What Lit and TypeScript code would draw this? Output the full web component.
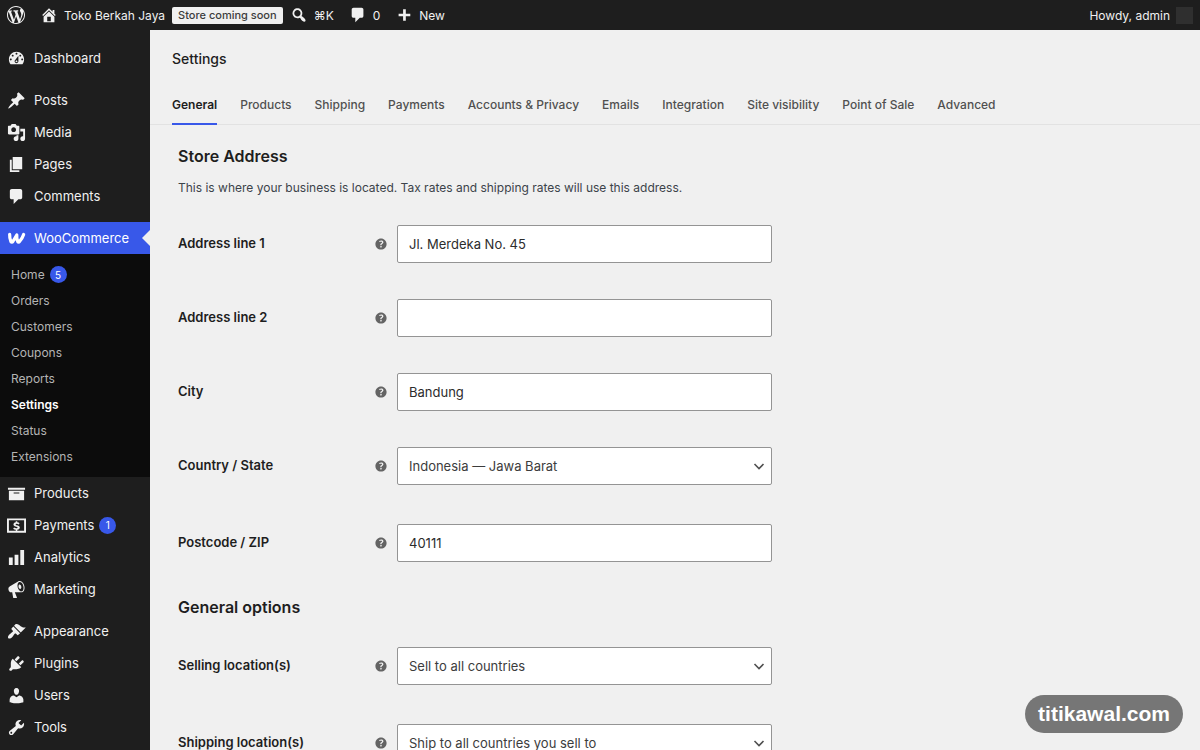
import { LitElement, html, css, svg, nothing } from "lit";
import { customElement, property, state } from "lit/decorators.js";
import { classMap } from "lit/directives/class-map.js";

const ICONS: Record<string, string> = {
  wordpress:
    "M20 10c0-5.51-4.49-10-10-10C4.48 0 0 4.49 0 10c0 5.52 4.48 10 10 10 5.51 0 10-4.48 10-10zM7.78 15.37L4.37 6.22c.55-.02 1.17-.08 1.17-.08.5-.06.44-1.13-.06-1.11 0 0-1.45.11-2.37.11-.18 0-.37 0-.58-.01C4.12 2.69 6.87 1.11 10 1.11c2.33 0 4.45.87 6.05 2.34-.68-.11-1.65.39-1.65 1.58 0 .74.45 1.36.9 2.1.35.61.55 1.36.55 2.46 0 1.49-1.4 5-1.4 5l-3.03-8.37c.54-.02.82-.17.82-.17.5-.05.44-1.25-.06-1.22 0 0-1.44.12-2.38.12-.87 0-2.33-.12-2.33-.12-.5-.03-.56 1.2-.06 1.22l.92.08 1.26 3.41zM17.41 10c.24-.64.74-1.87.43-4.25.7 1.29 1.05 2.71 1.05 4.25 0 3.29-1.73 6.24-4.4 7.78.97-2.59 1.94-5.2 2.92-7.78zM6.1 18.09C3.12 16.65 1.11 13.53 1.11 10c0-1.3.23-2.48.72-3.59C3.25 10.3 4.67 14.2 6.1 18.09zm4.03-6.63l2.58 6.98c-.86.29-1.76.45-2.71.45-.79 0-1.57-.11-2.29-.33.81-2.38 1.62-4.74 2.42-7.1z",
  home:
    "M16 8.5l1.53 1.53-1.06 1.06L10 4.6l-6.47 6.49-1.06-1.06L10 2.5l4 4v-2h2v4zm-6-2.46l6 5.99V18H4v-5.97zM12 17v-5H8v5h4z",
  search:
    "M12.14 4.18c1.87 1.87 2.11 4.75.72 6.89.12.1.22.21.36.31.2.16.47.36.81.59.34.24.56.39.66.47.42.31.73.57.94.78.32.32.6.65.84 1 .25.35.44.69.59 1.04.14.35.21.68.18 1-.02.32-.14.59-.36.81s-.49.34-.81.36c-.31.02-.65-.04-.99-.19-.35-.14-.7-.34-1.04-.59-.35-.24-.68-.52-1-.84-.21-.21-.47-.52-.77-.93-.1-.13-.25-.35-.47-.66-.22-.32-.4-.57-.56-.78-.16-.2-.29-.35-.44-.5-2.07 1.09-4.69.76-6.44-.98-2.14-2.15-2.14-5.64 0-7.78 2.15-2.15 5.63-2.15 7.78 0zm-1.41 6.36c1.36-1.37 1.36-3.58 0-4.95-1.37-1.37-3.59-1.37-4.95 0-1.37 1.37-1.37 3.58 0 4.95 1.36 1.37 3.58 1.37 4.95 0z",
  plus: "M17 8.5v3h-5v5H9v-5H4v-3h5v-5h3v5h5z",
  dashboard:
    "M3.76 16h12.48c1.1-1.37 1.76-3.11 1.76-5 0-4.42-3.58-8-8-8s-8 3.58-8 8c0 1.89.66 3.63 1.76 5zM10 4c.55 0 1 .45 1 1s-.45 1-1 1-1-.45-1-1 .45-1 1-1zM6 6c.55 0 1 .45 1 1s-.45 1-1 1-1-.45-1-1 .45-1 1-1zm8 0c.55 0 1 .45 1 1s-.45 1-1 1-1-.45-1-1 .45-1 1-1zm-5.37 5.55L12 7v6c0 1.1-.9 2-2 2s-2-.9-2-2c0-.57.24-1.08.63-1.45zM4 10c.55 0 1 .45 1 1s-.45 1-1 1-1-.45-1-1 .45-1 1-1zm12 0c.55 0 1 .45 1 1s-.45 1-1 1-1-.45-1-1 .45-1 1-1zm-5 3c0-.55-.45-1-1-1s-1 .45-1 1 .45 1 1 1 1-.45 1-1z",
  post:
    "M10.44 3.02l1.82-1.82 6.36 6.35-1.83 1.82c-1.05-.68-2.48-.57-3.41.36l-.75.75c-.92.93-1.04 2.35-.35 3.41l-1.83 1.82-2.41-2.41-2.8 2.79c-.42.42-3.38 2.71-3.8 2.29s1.86-3.39 2.28-3.81l2.79-2.79L4.1 9.36l1.83-1.82c1.05.69 2.48.57 3.4-.36l.75-.75c.93-.92 1.05-2.35.36-3.41z",
  media:
    "M13 11V4c0-.55-.45-1-1-1h-1.67L9 1H5L3.67 3H2c-.55 0-1 .45-1 1v7c0 .55.45 1 1 1h10c.55 0 1-.45 1-1zM7 4.5c1.38 0 2.5 1.12 2.5 2.5S8.38 9.5 7 9.5 4.5 8.38 4.5 7 5.62 4.5 7 4.5zM14 6h5v10.5c0 1.38-1.12 2.5-2.5 2.5S14 17.88 14 16.5s1.12-2.5 2.5-2.5c.17 0 .34.02.5.05V9h-3V6zm-4 8.05V13h2v3.5c0 1.38-1.12 2.5-2.5 2.5S7 17.88 7 16.5 8.12 14 9.5 14c.17 0 .34.02.5.05z",
  page: "M6 15V2h10v13H6zm-1 1h8v2H3V5h2v11z",
  comment:
    "M5 2h9c1.1 0 2 .9 2 2v7c0 1.1-.9 2-2 2h-2l-5 5v-5H5c-1.1 0-2-.9-2-2V4c0-1.1.9-2 2-2z",
  archive: "M19 4v2H1V4h18zM2 7h16v10H2V7zm11 3V9H7v1h6z",
  payments:
    "M0 2.5h20v15H0zM2 4.5v11h16v-11zM9.2 5.5h1.6v1.1c1 .1 1.8.5 2.4 1l-.9 1.3c-.6-.4-1.3-.7-2-.7-.8 0-1.2.3-1.2.7 0 1.3 4.4.6 4.4 3.2 0 1.3-1 2.1-2.7 2.3v1.1H9.2v-1.1c-1.1-.1-2-.5-2.7-1.1l.9-1.3c.7.5 1.5.8 2.3.8.9 0 1.5-.2 1.5-.7 0-1.3-4.4-.7-4.4-3.2 0-1.2.9-2.1 2.4-2.3z",
  chart: "M18 18V2h-4v16h4zm-6 0V7H8v11h4zm-6 0v-8H2v8h4z",
  megaphone:
    "M18.15 5.94c.46 1.62.38 3.22-.02 4.48-.42 1.28-1.26 2.18-2.3 2.48-.16.06-.26.06-.4.06-.06.02-.12.02-.18.02-.06.02-.14.02-.22.02h-6.8l2.22 5.5c.02.14-.06.26-.14.34-.08.1-.24.16-.34.16H6.95c-.1 0-.26-.06-.34-.16-.08-.08-.16-.2-.14-.34l-1-5.5H4.25l-.02-.02c-.5.06-1.08-.18-1.54-.62s-.88-1.08-1.06-1.88c-.24-.8-.2-1.56-.02-2.2.18-.62.58-1.08 1.06-1.3l.02-.02 9-5.4c.1-.06.18-.1.24-.16.06-.04.14-.08.24-.12.16-.08.28-.12.5-.18 1.04-.3 2.24.1 3.22.98s1.84 2.24 2.26 3.86zm-2.58 5.98h-.02c.4-.1.74-.34 1.04-.7.58-.7.86-1.76.86-3.04 0-.64-.1-1.3-.28-1.98-.34-1.36-1.02-2.5-1.78-3.24s-1.68-1.1-2.46-.88c-.82.22-1.4.96-1.7 2-.32 1.04-.28 2.36.06 3.72.38 1.36 1 2.5 1.8 3.24.78.74 1.62 1.1 2.48.88zm-2.54-7.08c.22-.04.42-.02.62.04.38.16.76.48 1.02 1s.42 1.2.42 1.78c0 .3-.04.56-.12.8-.18.48-.44.84-.86.94-.34.1-.8-.06-1.14-.4s-.64-.86-.78-1.5c-.18-.62-.12-1.24.02-1.72s.48-.84.82-.94z",
  appearance:
    "M14.48 11.06L7.41 3.99l1.5-1.5c.5-.56 2.3-.47 3.51.32 1.21.8 1.43 1.28 2.91 2.1 1.18.64 2.45 1.26 4.45.85zm-.71.71L6.7 4.7 4.93 6.47c-.39.39-.39 1.02 0 1.41l1.06 1.06c.39.39.39 1.03 0 1.42-.6.6-1.43 1.11-2.21 1.69-.35.26-.7.53-1.01.84C1.43 14.23.4 16.08 1.4 17.07c.99 1 2.84-.03 4.18-1.36.31-.31.58-.66.85-1.02.57-.78 1.08-1.61 1.69-2.21.39-.39 1.02-.39 1.41 0l1.06 1.06c.39.39 1.02.39 1.41 0z",
  plugins:
    "M13.11 4.36L9.87 7.6 8 5.73l3.24-3.24c.35-.34 1.05-.2 1.56.32.52.51.66 1.21.31 1.55zm-8 1.77l.91-1.12 9.01 9.01-1.19.84c-.71.71-2.63 1.16-3.82 1.16H6.14L4.9 17.26c-.59.59-1.54.59-2.12 0-.59-.58-.59-1.53 0-2.12l1.24-1.24v-3.88c0-1.13.4-3.19 1.09-3.89zm7.26 3.97l3.24-3.24c.34-.35 1.04-.21 1.55.31.52.51.66 1.21.31 1.55l-3.24 3.25z",
  users:
    "M10 9.25c-2.27 0-2.73-3.44-2.73-3.44C7 4.02 7.82 2 9.97 2c2.16 0 2.98 2.02 2.71 3.81 0 0-.41 3.44-2.68 3.44zm0 2.57L12.72 10c2.39 0 4.52 2.33 4.52 4.53v2.49s-3.65 1.13-7.24 1.13c-3.65 0-7.24-1.13-7.24-1.13v-2.49c0-2.25 1.94-4.48 4.47-4.48z",
  tools:
    "M16.68 9.77c-1.34 1.34-3.3 1.67-4.95.99l-5.41 6.52c-.99.99-2.59.99-3.58 0s-.99-2.59 0-3.57l6.52-5.42c-.68-1.65-.35-3.61.99-4.95 1.28-1.28 3.12-1.62 4.72-1.06l-2.89 2.89 2.82 2.82 2.86-2.87c.53 1.58.18 3.39-1.08 4.65zM3.81 16.21c.4.39 1.04.39 1.43 0 .4-.4.4-1.04 0-1.43-.39-.4-1.03-.4-1.43 0-.39.39-.39 1.03 0 1.43z",
  help:
    "M17 10c0-3.87-3.14-7-7-7-3.87 0-7 3.13-7 7s3.13 7 7 7c3.86 0 7-3.13 7-7zm-6.3 1.48H9.14v-.43c0-.38.08-.7.24-.98s.46-.57.88-.89c.41-.29.68-.53.81-.71.14-.18.2-.39.2-.62 0-.25-.09-.44-.28-.58-.19-.13-.45-.19-.79-.19-.58 0-1.25.19-2 .57l-.64-1.28c.87-.49 1.8-.74 2.77-.74.81 0 1.45.2 1.92.58.48.39.71.91.71 1.55 0 .43-.09.8-.29 1.11-.19.32-.57.67-1.11 1.06-.38.28-.61.49-.71.63-.1.15-.15.34-.15.57v.35zm-1.47 2.74c-.18-.17-.27-.42-.27-.73 0-.33.08-.58.26-.75s.43-.25.77-.25c.32 0 .57.09.75.26s.27.42.27.74c0 .3-.09.55-.27.72-.18.18-.43.27-.75.27-.33 0-.58-.09-.76-.26z",
};

// The WooCommerce mark is a single heavy rounded stroke rather than a filled outline.
const STROKED: Record<string, string> = {
  woo: "M2.8 5.7c-.1 2.700.3 5.300 1.300 7.500.6.9 1.500.8 2.100 0L10.300 6.300c-.2 2.500.1 4.900 1 6.900.5.8 1.300.8 1.900 0 2-2.300 3.400-4.800 4.300-7.500",
};

@customElement("wp-icon")
export class WpIcon extends LitElement {
  static styles = css`
    :host {
      display: block;
      flex: none;
      width: 19px;
      height: 19px;
    }
    svg {
      display: block;
      width: 100%;
      height: 100%;
      fill: currentColor;
    }
    .stroked {
      fill: none;
      stroke: currentColor;
      stroke-width: 3.4;
      stroke-linecap: round;
      stroke-linejoin: round;
    }
  `;

  @property() name = "";

  render() {
    const stroked = STROKED[this.name];
    return html`<svg viewBox="0 0 20 20" aria-hidden="true">
      ${stroked
        ? svg`<path class="stroked" d=${stroked}></path>`
        : svg`<path fill-rule="evenodd" d=${ICONS[this.name] ?? ""}></path>`}
    </svg>`;
  }
}

interface MenuItem {
  label: string;
  icon: string;
  count?: number;
  children?: { label: string; count?: number }[];
}

const MENU: MenuItem[][] = [
  [{ label: "Dashboard", icon: "dashboard" }],
  [
    { label: "Posts", icon: "post" },
    { label: "Media", icon: "media" },
    { label: "Pages", icon: "page" },
    { label: "Comments", icon: "comment" },
  ],
  [
    {
      label: "WooCommerce",
      icon: "woo",
      children: [
        { label: "Home", count: 5 },
        { label: "Orders" },
        { label: "Customers" },
        { label: "Coupons" },
        { label: "Reports" },
        { label: "Settings" },
        { label: "Status" },
        { label: "Extensions" },
      ],
    },
    { label: "Products", icon: "archive" },
    { label: "Payments", icon: "payments", count: 1 },
    { label: "Analytics", icon: "chart" },
    { label: "Marketing", icon: "megaphone" },
  ],
  [
    { label: "Appearance", icon: "appearance" },
    { label: "Plugins", icon: "plugins" },
    { label: "Users", icon: "users" },
    { label: "Tools", icon: "tools" },
  ],
];

@customElement("admin-menu")
export class AdminMenu extends LitElement {
  static styles = css`
    :host {
      display: block;
      background: #1e1e1e;
      overflow: hidden;
    }
    .menu {
      display: flex;
      flex-direction: column;
      gap: 10px;
      padding: 12px 0;
    }
    ul {
      list-style: none;
      margin: 0;
      padding: 0;
    }
    a {
      color: #f0f0f0;
      text-decoration: none;
    }
    .item {
      position: relative;
      display: flex;
      align-items: center;
      height: 32px;
      padding-left: 7px;
      gap: 8px;
      font-size: 13px;
    }
    .item.current {
      background: #3858e9;
      color: #fff;
    }
    .item.current::after {
      content: "";
      position: absolute;
      right: 0;
      top: 8px;
      border: 8px solid transparent;
      border-left-width: 0;
      border-right-color: #f0f0f0;
    }
    .badge {
      display: grid;
      place-items: center;
      width: 17px;
      height: 17px;
      border-radius: 50%;
      background: #3858e9;
      color: #fff;
      font-size: 10px;
    }
    .item .badge {
      margin-left: -3px;
    }
    .submenu {
      padding: 7px 0;
      background: #0c0c0c;
    }
    .sub {
      display: flex;
      align-items: center;
      gap: 5px;
      padding: 5px 11px;
      font-size: 12px;
      line-height: 16px;
      color: #b4b4b4;
    }
    .sub.active {
      color: #fff;
      font-weight: 600;
    }
  `;

  render() {
    return html`<nav class="menu" aria-label="Main menu">
      ${MENU.map(
        (group) => html`<ul>
          ${group.map(
            (item) => html`<li>
              <a href="#" class=${classMap({ item: true, current: !!item.children })}>
                <wp-icon name=${item.icon}></wp-icon>
                <span>${item.label}</span>
                ${item.count ? html`<span class="badge">${item.count}</span>` : nothing}
              </a>
              ${item.children
                ? html`<ul class="submenu">
                    ${item.children.map(
                      (c) => html`<li>
                        <a href="#" class=${classMap({ sub: true, active: c.label === "Settings" })}>
                          ${c.label}${c.count ? html`<span class="badge">${c.count}</span>` : nothing}
                        </a>
                      </li>`
                    )}
                  </ul>`
                : nothing}
            </li>`
          )}
        </ul>`
      )}
    </nav>`;
  }
}

@customElement("admin-bar")
export class AdminBar extends LitElement {
  static styles = css`
    :host {
      display: flex;
      align-items: center;
      height: 30px;
      padding: 0 7px;
      background: #1e1e1e;
      color: #f0f0f0;
      font-size: 12px;
    }
    a {
      display: flex;
      align-items: center;
      gap: 6px;
      color: inherit;
      text-decoration: none;
    }
    .links {
      display: flex;
      align-items: center;
      flex: 1;
      gap: 15px;
    }
    .site {
      display: flex;
      align-items: center;
      gap: 7px;
    }
    .status {
      padding: 0 6px;
      border-radius: 2px;
      background: #f0f0f0;
      color: #3c3c3c;
      font-size: 11px;
      font-weight: 500;
      line-height: 17px;
    }
    wp-icon {
      width: 18px;
      height: 18px;
    }
    .avatar {
      width: 17px;
      height: 17px;
      background: #2f2f2f;
    }
  `;

  render() {
    return html`
      <div class="links">
        <a href="#" aria-label="About WordPress"><wp-icon name="wordpress"></wp-icon></a>
        <div class="site">
          <a href="#"><wp-icon name="home"></wp-icon>Toko Berkah Jaya</a>
          <a href="#" class="status">Store coming soon</a>
          <a href="#"><wp-icon name="search"></wp-icon>⌘K</a>
        </div>
        <a href="#"><wp-icon name="comment"></wp-icon>0</a>
        <a href="#"><wp-icon name="plus"></wp-icon>New</a>
      </div>
      <a href="#">Howdy, admin<span class="avatar"></span></a>
    `;
  }
}

interface Field {
  id: string;
  label: string;
  value: string;
  select?: boolean;
}

const SECTIONS: { title: string; note?: string; fields: Field[] }[] = [
  {
    title: "Store Address",
    note: "This is where your business is located. Tax rates and shipping rates will use this address.",
    fields: [
      { id: "address1", label: "Address line 1", value: "Jl. Merdeka No. 45" },
      { id: "address2", label: "Address line 2", value: "" },
      { id: "city", label: "City", value: "Bandung" },
      { id: "country", label: "Country / State", value: "Indonesia — Jawa Barat", select: true },
      { id: "postcode", label: "Postcode / ZIP", value: "40111" },
    ],
  },
  {
    title: "General options",
    fields: [
      { id: "selling", label: "Selling location(s)", value: "Sell to all countries", select: true },
      { id: "shipping", label: "Shipping location(s)", value: "Ship to all countries you sell to", select: true },
    ],
  },
];

@customElement("settings-form")
export class SettingsForm extends LitElement {
  static styles = css`
    :host {
      display: block;
      padding: 0 28px;
    }
    h2 {
      margin: 0;
      font-size: 16px;
      font-weight: 600;
      line-height: 22px;
      color: #1e1e1e;
    }
    .section {
      padding-top: 20px;
    }
    .section + .section {
      padding-top: 16px;
    }
    .note {
      margin: 13px 0 0;
      font-size: 12px;
      line-height: 16px;
      color: #3c434a;
    }
    .fields {
      padding-top: 11px;
    }
    .row {
      display: grid;
      grid-template-columns: 187px 16px minmax(0, 375px);
      column-gap: 8px;
      align-items: center;
      padding: 18px 0;
    }
    .row.choice {
      padding-bottom: 21px;
    }
    label {
      padding-bottom: 2px;
      font-size: 13px;
      font-weight: 600;
      line-height: 18px;
      color: #1e1e1e;
    }
    wp-icon {
      width: 16px;
      height: 16px;
      color: #646464;
    }
    .control {
      display: grid;
      align-items: center;
    }
    input,
    select {
      grid-area: 1 / 1;
      box-sizing: border-box;
      width: 100%;
      height: 38px;
      margin: 0;
      padding: 0 11px;
      border: 1px solid #949494;
      border-radius: 2px;
      background: #fff;
      color: #2c2c2c;
      font: inherit;
      font-size: 13px;
      appearance: none;
    }
    select {
      color: #3c3c3c;
    }
    .chevron {
      grid-area: 1 / 1;
      justify-self: end;
      width: 12px;
      height: 8px;
      margin-right: 7px;
      fill: none;
      stroke: #505050;
      stroke-width: 1.6;
      pointer-events: none;
    }
  `;

  private control(f: Field) {
    return f.select
      ? html`<select id=${f.id}>
            <option>${f.value}</option>
          </select>
          <svg class="chevron" viewBox="0 0 12 8" aria-hidden="true"><path d="M1.5 2 6 6.5 10.5 2"></path></svg>`
      : html`<input id=${f.id} type="text" .value=${f.value} />`;
  }

  render() {
    return SECTIONS.map(
      (s) => html`<section class="section">
        <h2>${s.title}</h2>
        ${s.note ? html`<p class="note">${s.note}</p>` : nothing}
        <div class="fields">
          ${s.fields.map(
            (f) => html`<div class=${classMap({ row: true, choice: !!f.select })}>
              <label for=${f.id}>${f.label}</label>
              <wp-icon name="help"></wp-icon>
              <div class="control">${this.control(f)}</div>
            </div>`
          )}
        </div>
      </section>`
    );
  }
}

const TABS = [
  "General",
  "Products",
  "Shipping",
  "Payments",
  "Accounts & Privacy",
  "Emails",
  "Integration",
  "Site visibility",
  "Point of Sale",
  "Advanced",
];

@customElement("app-root")
export class AppRoot extends LitElement {
  static styles = css`
    :host {
      display: grid;
      grid-template: auto minmax(0, 1fr) / 150px minmax(0, 1fr);
      height: 100vh;
      background: #f0f0f0;
      color: #1e1e1e;
      font-family: Inter, "Liberation Sans", sans-serif;
    }
    admin-bar {
      grid-column: 1 / -1;
    }
    main {
      overflow: hidden;
    }
    h1 {
      margin: 0;
      padding: 19px 22px;
      font-size: 14px;
      font-weight: 500;
      line-height: 20px;
    }
    .tabs {
      display: flex;
      gap: 23px;
      padding: 0 22px;
      border-bottom: 1px solid #e2e2e2;
    }
    .tab {
      padding: 7px 0 8px;
      border-bottom: 2px solid transparent;
      margin-bottom: -1px;
      color: #505050;
      font-size: 12px;
      font-weight: 500;
      line-height: 20px;
      text-decoration: none;
      white-space: nowrap;
    }
    .tab.active {
      border-color: #3858e9;
      color: #1e1e1e;
      font-weight: 600;
    }
    .site-mark {
      position: fixed;
      right: 17px;
      bottom: 17px;
      padding: 0 13px;
      border-radius: 19px;
      background: #767676;
      color: #fff;
      font: bold 21px/38px "Liberation Sans", Arial, sans-serif;
    }
  `;

  @state() private tab = "General";

  render() {
    return html`
      <admin-bar></admin-bar>
      <admin-menu></admin-menu>
      <main>
        <h1>Settings</h1>
        <nav class="tabs" aria-label="Settings sections">
          ${TABS.map(
            (t) => html`<a
              href="#"
              class=${classMap({ tab: true, active: t === this.tab })}
              @click=${(e: Event) => {
                e.preventDefault();
                this.tab = t;
              }}
              >${t}</a
            >`
          )}
        </nav>
        <settings-form></settings-form>
      </main>
      <div class="site-mark">titikawal.com</div>
    `;
  }
}
